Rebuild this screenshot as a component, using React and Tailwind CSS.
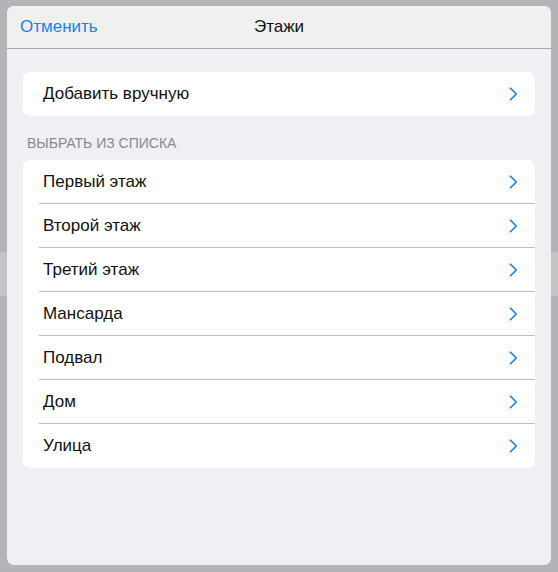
import React from "react";

function Chevron() {
  return (
    <svg width="9" height="14" viewBox="0 0 9 14" className="shrink-0">
      <polyline points="1.6,1.3 7.2,7 1.6,12.7" fill="none" stroke="#1a7ff5" strokeWidth="1.6" strokeLinecap="square" strokeLinejoin="miter" />
    </svg>
  );
}

function Row({ label, last }) {
  return (
    <div className="flex h-[44px] items-stretch pl-[16px]">
      <div className={"flex flex-1 items-center justify-between pl-[4px] pr-[17px] " + (last ? "" : "border-b border-[#bdbdc0]")}>
        <span className="text-[17px] text-[#111]">{label}</span>
        <Chevron />
      </div>
    </div>
  );
}

export default function App() {
  const items = ["Первый этаж", "Второй этаж", "Третий этаж", "Мансарда", "Подвал", "Дом", "Улица"];
  return (
    <div
      className="w-[558px] h-[572px] pt-[6px] px-[7px] pb-[7px] bg-[linear-gradient(to_bottom,#b4b3b8_252px,#c4c4c7_252px,#c4c4c7_296px,#b4b3b8_296px)]"
      style={{ fontFamily: '"Liberation Sans", Arial, sans-serif' }}
    >
      <div className="flex h-[559px] flex-col overflow-hidden rounded-[7px] bg-[#efeff4]">
        <div className="relative flex h-[43px] shrink-0 items-center border-b border-[#a8a8a8] bg-[#f0f0f0] px-[13px]">
          <span className="text-[17px] text-[#1a7ff5]">Отменить</span>
          <span className="absolute left-0 right-0 text-center text-[17px] text-[#111] pointer-events-none">Этажи</span>
        </div>
        <div className="flex flex-col px-[16px] pt-[23px]">
          <div className="overflow-hidden rounded-[7px] bg-white">
            <Row label="Добавить вручную" last />
          </div>
          <div className="flex h-[44px] items-end pb-[6px] pl-[4px] text-[14px] text-[#8a8a8f]">
            ВЫБРАТЬ ИЗ СПИСКА
          </div>
          <div className="overflow-hidden rounded-[7px] bg-white">
            {items.map((it, i) => (
              <Row key={it} label={it} last={i === items.length - 1} />
            ))}
          </div>
        </div>
      </div>
    </div>
  );
}
